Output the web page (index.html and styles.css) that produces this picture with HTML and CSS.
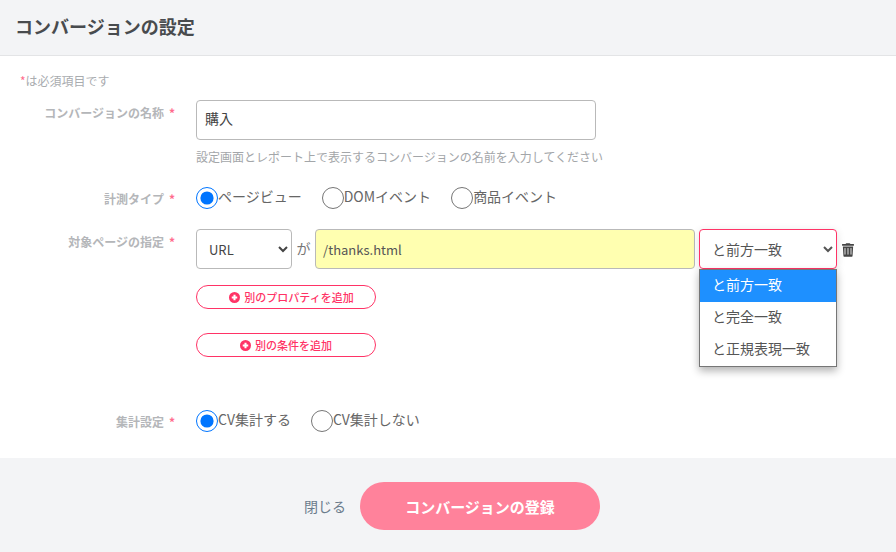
FILE: index.html
```html
<!DOCTYPE html>
<html lang="ja">
<head>
<meta charset="utf-8">
<title>コンバージョンの設定</title>
<link rel="stylesheet" href="styles.css">
</head>
<body>
<div class="modal">
  <header class="head"><h1 class="title">コンバージョンの設定</h1></header>
  <main class="content">
    <p class="note"><span class="req">*</span>は必須項目です</p>
    <div class="row row-name">
      <div class="label">コンバージョンの名称<span class="req star">*</span></div>
      <div class="field">
        <input class="text name" type="text" value="購入">
        <p class="help">設定画面とレポート上で表示するコンバージョンの名前を入力してください</p>
      </div>
    </div>
    <div class="row row-type">
      <div class="label">計測タイプ<span class="req star">*</span></div>
      <div class="field radios">
        <label class="radio"><input type="radio" name="t" checked><span>ページビュー</span></label>
        <label class="radio"><input type="radio" name="t"><span>DOMイベント</span></label>
        <label class="radio"><input type="radio" name="t"><span>商品イベント</span></label>
      </div>
    </div>
    <div class="row row-target">
      <div class="label">対象ページの指定<span class="req star">*</span></div>
      <div class="field">
        <div class="cond">
          <select class="sel sel-prop"><option>URL</option></select>
          <span class="ga">が</span>
          <input class="text url" type="text" value="/thanks.html">
          <div class="match">
            <select class="sel sel-match"><option>と前方一致</option></select>
            <ul class="menu">
              <li class="opt active">と前方一致</li>
              <li class="opt">と完全一致</li>
              <li class="opt">と正規表現一致</li>
            </ul>
          </div>
          <svg class="trash" viewBox="0 0 448 512" width="12" height="14"><path fill="#444" d="M432 32H312l-9.400-18.700A24 24 0 0 0 281.100 0H166.800a23.700 23.700 0 0 0-21.400 13.300L136 32H16A16 16 0 0 0 0 48v32a16 16 0 0 0 16 16h416a16 16 0 0 0 16-16V48a16 16 0 0 0-16-16zM53.200 467a48 48 0 0 0 47.900 45h245.800a48 48 0 0 0 47.900-45L416 128H32zM320 192a16 16 0 0 1 32 0v224a16 16 0 0 1-32 0zm-112 0a16 16 0 0 1 32 0v224a16 16 0 0 1-32 0zm-112 0a16 16 0 0 1 32 0v224a16 16 0 0 1-32 0z"/></svg>
        </div>
        <button class="add add-prop" type="button"><svg class="plus" viewBox="0 0 16 16" width="11" height="11"><circle cx="8" cy="8" r="8" fill="#ff3366"/><path d="M8 4v8M4 8h8" stroke="#fff" stroke-width="3"/></svg>別のプロパティを追加</button>
        <button class="add add-cond" type="button"><svg class="plus" viewBox="0 0 16 16" width="11" height="11"><circle cx="8" cy="8" r="8" fill="#ff3366"/><path d="M8 4v8M4 8h8" stroke="#fff" stroke-width="3"/></svg>別の条件を追加</button>
      </div>
    </div>
    <div class="row row-agg">
      <div class="label">集計設定<span class="req star">*</span></div>
      <div class="field radios">
        <label class="radio"><input type="radio" name="a" checked><span>CV集計する</span></label>
        <label class="radio"><input type="radio" name="a"><span>CV集計しない</span></label>
      </div>
    </div>
  </main>
  <footer class="foot">
    <a class="close">閉じる</a>
    <button class="submit" type="button">コンバージョンの登録</button>
  </footer>
</div>
</body>
</html>
```
FILE: styles.css
```css
* { box-sizing: border-box; }
html, body { margin: 0; height: 100%; }
body { font-family: "Noto Sans CJK JP", "Noto Sans", sans-serif; color: #444; background: #fff; overflow: hidden; }
.modal { width: 896px; height: 552px; display: flex; flex-direction: column; }
.head { height: 56px; background: #f3f4f6; border-bottom: 1px solid #e3e4e6; padding: 0 15px 4px; display: flex; align-items: center; }
.title { margin: 0; font-size: 18px; font-weight: 700; color: #484b4e; line-height: 1; }
.content { flex: 1; padding: 16px 0 0 19px; }
.note { margin: 0 0 0 1px; font-size: 12px; line-height: 18px; color: #a9acaf; height: 28px; }
.req { color: #ff6b8e; }
.row { display: flex; }
.label { width: 156px; flex: none; text-align: right; font-size: 12px; font-weight: 700; color: #b4b6b9; line-height: 18px; }
.star { margin-left: 5px; }
.field { margin-left: 21px; flex: 1; }
.row-name { height: 86px; }
.row-name .label { padding-top: 4px; }
.text { display: block; height: 40px; border: 1px solid #b9b9b9; border-radius: 4px; padding: 0 7px; font: 13px "Noto Sans CJK JP", sans-serif; color: #444; outline: none; }
.name { width: 400px; padding: 0 8px 4px; font-size: 14px; }
.help { margin: 8px 0 0; font-size: 12px; line-height: 18px; color: #a3a6a9; }
.radios { display: flex; gap: 20px; }
.radio { display: flex; align-items: center; height: 24px; font-size: 14px; line-height: 20px; color: #666; }
.radio span { padding-bottom: 4px; }
.radio input { width: 22px; height: 22px; margin: 0; flex: none; }
.row-type { height: 43px; }
.row-type .label { padding-top: 4px; }
.row-target { height: 180px; }
.row-target .label { padding-top: 4px; }
.cond { display: flex; align-items: flex-start; height: 40px; }
.sel { height: 40px; border: 1px solid #b9b9b9; border-radius: 4px; background: #fff; font: 13px "Noto Sans CJK JP", sans-serif; color: #444; padding: 0 4px 0 8px; outline: none; }
.sel-prop { width: 96px; }
.ga { width: 23px; text-align: center; font-size: 14px; line-height: 38px; color: #777; }
.url { width: 380px; background: #ffffb0; color: #555; }
.match { position: relative; width: 138px; margin-left: 4px; }
.sel-match { width: 138px; border-color: #ff3366; font-size: 14px; color: #555; box-shadow: 0 2px 8px rgba(0,0,0,.12); }
.menu { position: absolute; left: 0; top: 40px; width: 138px; height: 98px; margin: 0; padding: 0; list-style: none; background: #fff; border: 1px solid #767676; box-shadow: 0 4px 8px rgba(0,0,0,.3); z-index: 2; }
.opt { height: 32px; padding-left: 12px; font-size: 14px; line-height: 28px; color: #555; }
.opt.active { background: #1e90ff; color: #fff; }
.trash { margin: 14px 0 0 5px; flex: none; }
.add { display: flex; align-items: center; justify-content: center; gap: 4px; width: 180px; height: 24px; background: #fff; border: 1px solid #ff3366; border-radius: 12px; color: #ff3366; font: 500 11px "Noto Sans CJK JP", sans-serif; padding: 0; margin-top: 16px; }
.add-prop { padding-left: 11px; }
.add-cond { margin-top: 24px; }
.row-agg { height: 49px; }
.row-agg .label { padding-top: 4px; }
.foot { height: 94px; background: #f3f4f6; display: flex; align-items: center; justify-content: center; gap: 14px; padding: 2px 0 0 8px; }
.close { font-size: 14px; color: #6b7c8c; }
.submit { width: 240px; height: 48px; border: 0; border-radius: 24px; background: #ff829b; color: #fff; font: 700 15px "Noto Sans CJK JP", sans-serif; padding: 0; }
```
